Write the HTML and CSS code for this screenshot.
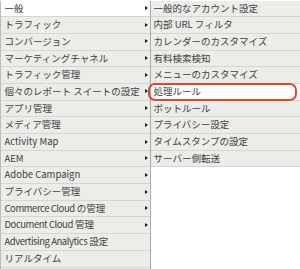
FILE: index.html
```html
<!DOCTYPE html>
<html lang="ja">
<head>
<meta charset="utf-8">
<link rel="stylesheet" href="styles.css">
</head>
<body>
<div class="menus">
  <ul class="col col-main">
    <li class="row active sub">一般</li>
    <li class="row sub">トラフィック</li>
    <li class="row sub">コンバージョン</li>
    <li class="row sub">マーケティングチャネル</li>
    <li class="row sub">トラフィック管理</li>
    <li class="row sub">個々のレポート スイートの設定</li>
    <li class="row sub">アプリ管理</li>
    <li class="row sub">メディア管理</li>
    <li class="row sub"><span class="en">Activity Map</span></li>
    <li class="row sub"><span class="en">AEM</span></li>
    <li class="row sub"><span class="en">Adobe Campaign</span></li>
    <li class="row sub">プライバシー管理</li>
    <li class="row sub"><span class="en tight">Commerce Cloud</span> の管理</li>
    <li class="row sub"><span class="en tight">Document Cloud</span> 管理</li>
    <li class="row"><span class="en tight">Advertising Analytics</span> 設定</li>
    <li class="row">リアルタイム</li>
  </ul>
  <ul class="col col-sub">
    <li class="row">一般的なアカウント設定</li>
    <li class="row">内部 <span class="en">URL</span> フィルタ</li>
    <li class="row">カレンダーのカスタマイズ</li>
    <li class="row">有料検索検知</li>
    <li class="row">メニューのカスタマイズ</li>
    <li class="row active marked">処理ルール</li>
    <li class="row">ボットルール</li>
    <li class="row">プライバシー設定</li>
    <li class="row">タイムスタンプの設定</li>
    <li class="row">サーバー側転送</li>
  </ul>
</div>
</body>
</html>
```

FILE: styles.css
```css
html, body {
  margin: 0;
  padding: 0;
  background: #ffffff;
  overflow: hidden;
}

body {
  width: 300px;
  height: 269px;
  font-family: "Noto Sans CJK JP", "Noto Sans", sans-serif;
  font-size: 9.5px;
  color: #404040;
}

.menus {
  display: flex;
  align-items: flex-start;
  padding-top: 0.5px;
}

.col {
  list-style: none;
  margin: 0;
  padding: 0;
}

.col-main {
  width: 149px;
  flex: none;
  border-left: 1px solid #b9bcc2;
  border-right: 1px solid #a9a9a9;
  min-height: 269px;
  background: #ecece8;
}

.col-sub {
  width: 160px;
  flex: none;
}

.row {
  position: relative;
  height: 15.7px;
  line-height: 15.7px;
  border-bottom: 1px solid #d6d6d2;
  background: #ecece8;
  white-space: nowrap;
}

.en.tight {
  letter-spacing: -0.45px;
}

.col-main .row {
  padding-left: 3.5px;
}

.col-sub .row {
  padding-left: 2.5px;
}

.row.active {
  background: #ffffff;
}

.row.sub::after {
  content: "";
  position: absolute;
  right: 2.5px;
  top: 5.5px;
  border-left: 3.5px solid #1e1e1e;
  border-top: 2.5px solid transparent;
  border-bottom: 2.5px solid transparent;
}

.row.marked::before {
  content: "";
  position: absolute;
  left: -3px;
  top: -1px;
  width: 145px;
  height: 14px;
  border: 2px solid #e6452d;
  border-radius: 7px;
}
```
